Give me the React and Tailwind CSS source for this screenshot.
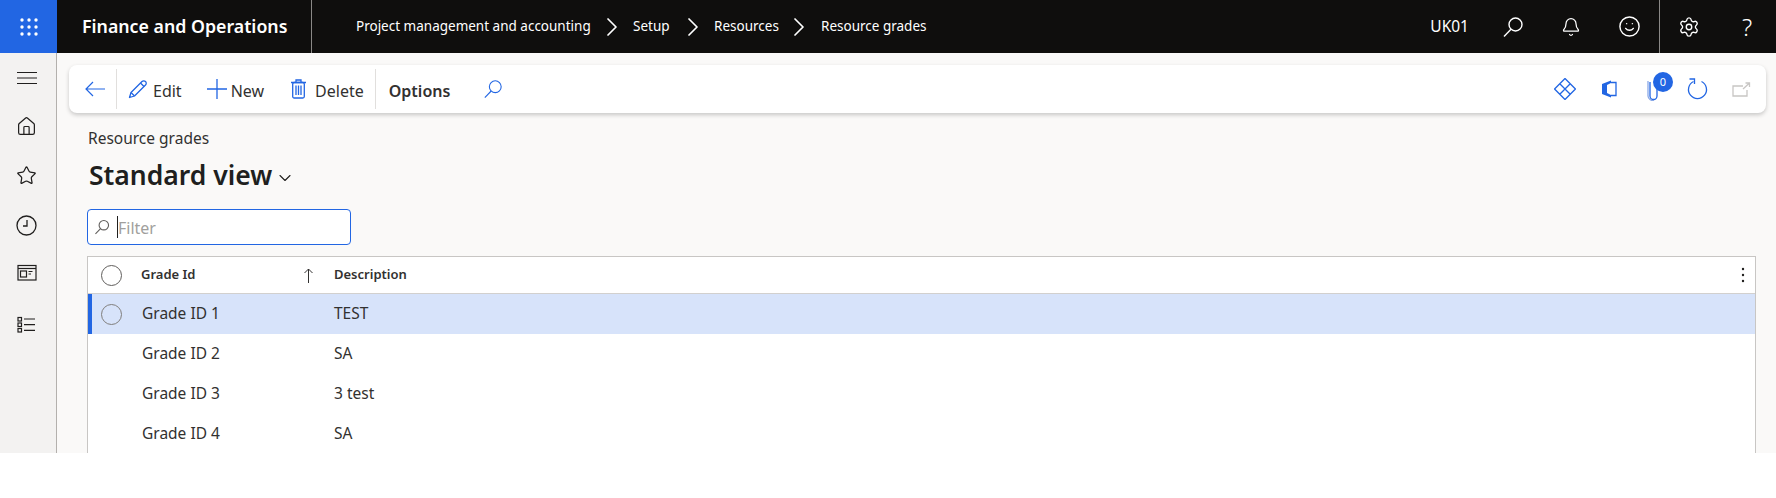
import React from "react";
import { Home, Star, Bell, Settings, Smile, ChevronDown, ChevronRight } from "lucide-react";

const font = { fontFamily: '"Noto Sans", "Open Sans", sans-serif' };

function Waffle() {
  return (
    <svg width="20" height="20" viewBox="0 0 20 20" fill="#fff">
      {[3, 10, 17].map((y) =>
        [3, 10, 17].map((x) => <circle key={`${x}-${y}`} cx={x} cy={y} r="1.7" />)
      )}
    </svg>
  );
}

// Magnifier with the lens up and to the right, like the Fluent one
function SearchIcon({ size = 22, color = "#fff", weight = 1.4 }) {
  return (
    <svg width={size} height={size} viewBox="0 0 22 22" fill="none" stroke={color} strokeWidth={weight}>
      <circle cx="13.5" cy="8.5" r="6.5" />
      <path d="M9 13.2 2 20.5" />
    </svg>
  );
}

function WorkspaceIcon() {
  return (
    <svg width="20" height="18" viewBox="0 0 20 18" fill="none" stroke="#201f1e" strokeWidth="1.2">
      <rect x="1" y="1.500" width="18" height="14.500" />
      <path d="M1 4.500h18" />
      <rect x="3.500" y="7" width="6" height="6" />
      <path d="M11.500 7.500h4M11.500 10h2.500" />
    </svg>
  );
}

function ListIcon() {
  return (
    <svg width="20" height="18" viewBox="0 0 20 18" fill="none" stroke="#201f1e" strokeWidth="1.2">
      <rect x="1" y="1.500" width="3.500" height="3.500" />
      <rect x="1" y="7" width="3.500" height="3.500" />
      <rect x="1" y="12.500" width="3.500" height="3.500" />
      <path d="M7 3h11M7 8.700h11M7 14.300h11" />
    </svg>
  );
}

function BackIcon() {
  return (
    <svg width="20" height="16" viewBox="0 0 20 16" fill="none" stroke="#2266e3" strokeWidth="1.200">
      <path d="M20 8H1M8 1 1 8l7 7" />
    </svg>
  );
}

function PencilIcon() {
  return (
    <svg width="20" height="20" viewBox="0 0 20 20" fill="none" stroke="#2266e3" strokeWidth="1.300" strokeLinejoin="round">
      <path d="M14 2.500a2.400 2.400 0 0 1 3.500 3.500L6.500 17 1.500 18.500 3 13.500z" />
      <path d="M12.500 4 16 7.500M3 13.500 6.500 17" />
    </svg>
  );
}

function PlusIcon() {
  return (
    <svg width="20" height="20" viewBox="0 0 20 20" stroke="#2266e3" strokeWidth="1.300">
      <path d="M10 0v20M0 10h20" />
    </svg>
  );
}

function TrashIcon() {
  return (
    <svg width="15" height="20" viewBox="0 0 15 20" fill="none" stroke="#2266e3" strokeWidth="1.300">
      <path d="M0 3.500h15M5 3.500V1h5v2.500" />
      <rect x="1.700" y="3.500" width="11.600" height="15.500" rx="1.500" />
      <path d="M5 6.500v9.500M7.500 6.500v9.500M10 6.500v9.500" />
    </svg>
  );
}

function DiamondIcon() {
  return (
    <svg width="22" height="22" viewBox="0 0 20 20" fill="none" stroke="#2266e3" strokeWidth="1.200" strokeLinejoin="round">
      <path d="M10 .5 19.500 10 10 19.500.5 10zM5.250 5.250l9.500 9.500M14.750 5.250l-9.500 9.500" />
    </svg>
  );
}

function OfficeIcon() {
  return (
    <svg width="15" height="18" viewBox="0 0 15 18">
      <path d="M0 4 9 .5v2.500L5 5v8l4 2v2.500L0 14z" fill="#2266e3" />
      <path d="M9 2.500h5v13H9" fill="none" stroke="#2266e3" strokeWidth="1.300" />
    </svg>
  );
}

function ClipIcon() {
  return (
    <svg width="12" height="24" viewBox="0 0 12 24" fill="none" stroke="#2266e3" strokeWidth="1.300">
      <path d="M3 5v14a3.500 3.500 0 0 0 7 0V4" />
      <path d="M1 4v15a5 5 0 0 0 6 4.500" stroke="#8aa9e8" />
    </svg>
  );
}

function RefreshIcon() {
  return (
    <svg width="21" height="22" viewBox="0 0 21 22" fill="none" stroke="#2266e3" strokeWidth="1.300">
      <path d="M6.500 3.500a9 9 0 1 0 8 0" />
      <path d="M2.500 1h5v5" />
    </svg>
  );
}

function OpenIcon() {
  return (
    <svg width="19" height="15" viewBox="0 0 19 15" fill="none" stroke="#c8c6c4" strokeWidth="1.300">
      <path d="M11 4H1v10h14V8" />
      <path d="M11 7 17.500 1M13.500 1h4v4" />
    </svg>
  );
}

function SortArrow() {
  return (
    <svg width="9" height="15" viewBox="0 0 9 15" fill="none" stroke="#323130" strokeWidth="1">
      <path d="M4.500 15V1M.5 5l4-4 4 4" />
    </svg>
  );
}

function Circle({ className }) {
  return <span className={`block w-[21px] h-[21px] rounded-full border ${className}`} />;
}

const crumbs = ["Setup", "Resources", "Resource grades"];
const rows = [
  { id: "Grade ID 1", desc: "TEST", selected: true },
  { id: "Grade ID 2", desc: "SA" },
  { id: "Grade ID 3", desc: "3 test" },
  { id: "Grade ID 4", desc: "SA" },
];

function TopBar() {
  return (
    <header className="flex h-[53px] shrink-0 items-center bg-[#0f0e0d] text-white">
      <div className="flex h-full w-[57px] items-center justify-center bg-[#2266e3]">
        <Waffle />
      </div>
      <div className="flex h-full w-[255px] items-center border-r border-[#8a8886] pl-[25px] text-[17.750px] font-semibold">
        Finance and Operations
      </div>
      <nav className="flex items-center pl-[44px] text-[13.500px]">
        <span className="w-[240px]">Project management and accounting</span>
        <ChevronRight size={32} strokeWidth={1.300} />
        <span className="ml-[5px] w-[48px]">{crumbs[0]}</span>
        <ChevronRight size={32} strokeWidth={1.300} className="-ml-[4px]" />
        <span className="ml-[5px] w-[72px]">{crumbs[1]}</span>
        <ChevronRight size={32} strokeWidth={1.300} className="-ml-[3px]" />
        <span className="ml-[6px]">{crumbs[2]}</span>
      </nav>
      <div className="ml-auto flex h-full items-center">
        <span className="mr-[15px] text-[15.500px]">UK01</span>
        <span className="flex w-[58px] justify-center"><SearchIcon /></span>
        <span className="flex w-[58px] justify-center"><Bell size={20} strokeWidth={1.500} /></span>
        <span className="flex w-[59px] justify-center"><Smile size={23} strokeWidth={1.500} /></span>
        <span className="flex h-full w-[59px] items-center justify-center border-l border-[#8a8886]">
          <Settings size={22} strokeWidth={1.500} />
        </span>
        <span className="flex w-[58px] justify-center text-[24px] font-light">?</span>
      </div>
    </header>
  );
}

function Sidebar() {
  return (
    <aside className="flex w-[57px] shrink-0 flex-col items-center border-r border-[#b3b0ad] bg-[#f3f2f1] pt-[15px] pr-[3px] text-[#201f1e]">
      <div className="flex h-[20px] items-center">
        <svg width="20" height="12" viewBox="0 0 20 12" stroke="#201f1e" strokeWidth="1">
          <path d="M0 .5h20M0 6h20M0 11.500h20" />
        </svg>
      </div>
      <div className="mt-[28px] flex flex-col items-center gap-[28px]">
        <Home size={21} strokeWidth={1.400} />
        <Star size={21} strokeWidth={1.400} />
        <svg className="mt-[1px]" width="21" height="21" viewBox="0 0 21 21" fill="none" stroke="#201f1e" strokeWidth="1.300">
          <circle cx="10.500" cy="10.500" r="9.500" />
          <path d="M11 5v6H7" />
        </svg>
        <WorkspaceIcon />
        <span className="mt-[6px]"><ListIcon /></span>
      </div>
    </aside>
  );
}

function Toolbar() {
  return (
    <div className="ml-[12px] mr-[10px] mt-[12px] flex h-[48px] items-center rounded-lg bg-white pl-[16px] text-[16px] text-[#323130] shadow-[0_2px_4px_rgba(0,0,0,0.2)]">
      <BackIcon />
      <span className="ml-[11px] h-[40px] w-px bg-[#e1dfdd]" />
      <span className="ml-[11px]"><PencilIcon /></span>
      <span className="relative top-[2px] ml-[5px]">Edit</span>
      <span className="ml-[25px]"><PlusIcon /></span>
      <span className="relative top-[2px] ml-[4px]">New</span>
      <span className="ml-[27px]"><TrashIcon /></span>
      <span className="relative top-[2px] ml-[9px]">Delete</span>
      <span className="ml-[11px] h-[40px] w-px bg-[#e1dfdd]" />
      <span className="relative top-[2px] ml-[13px] font-semibold">Options</span>
      <span className="ml-[33px]"><SearchIcon size={20} color="#2266e3" weight={1.200} /></span>
      <div className="ml-auto mr-[3px] flex items-center">
        <span className="flex w-[44px] justify-center"><DiamondIcon /></span>
        <span className="flex w-[44px] justify-center"><OfficeIcon /></span>
        <span className="relative flex w-[44px] justify-center">
          <ClipIcon />
          <span className="absolute -top-[5px] left-[22px] flex h-[20px] w-[20px] items-center justify-center rounded-full bg-[#2266e3] text-[11px] text-white">0</span>
        </span>
        <span className="flex w-[44px] justify-center"><RefreshIcon /></span>
        <span className="flex w-[44px] justify-center"><OpenIcon /></span>
      </div>
    </div>
  );
}

function Grid() {
  return (
    <div className="ml-[30px] mr-[20px] mt-[11px] border border-b-0 border-[#c8c6c4] bg-white text-[#323130]">
      <div className="flex h-[37px] items-center border-b border-[#d2d0ce] text-[13px] font-semibold">
        <span className="flex w-[46px] justify-center"><Circle className="border-[#605e5c]" /></span>
        <span className="ml-[7px] w-[163px]">Grade Id</span>
        <SortArrow />
        <span className="ml-[21px]">Description</span>
        <svg className="ml-auto mr-[10px]" width="4" height="16" viewBox="0 0 4 16" fill="#201f1e">
          <circle cx="2" cy="2" r="1.200" />
          <circle cx="2" cy="8" r="1.200" />
          <circle cx="2" cy="14" r="1.200" />
        </svg>
      </div>
      {rows.map((row) => (
        <div key={row.id} className={`flex h-[40px] items-center text-[15.500px] ${row.selected ? "bg-[#d7e3fa]" : ""}`}>
          <span className={`h-full w-[4px] ${row.selected ? "bg-[#2266e3]" : ""}`} />
          <span className="flex w-[38px] justify-center">
            {row.selected && <Circle className="border-[#807e7c]" />}
          </span>
          <span className="ml-[12px] w-[192px]">{row.id}</span>
          <span>{row.desc}</span>
        </div>
      ))}
    </div>
  );
}

export default function App() {
  return (
    <div className="flex h-[453px] flex-col overflow-hidden bg-white" style={font}>
      <TopBar />
      <div className="flex min-h-0 flex-1">
        <Sidebar />
        <main className="min-w-0 flex-1 overflow-hidden bg-[#faf9f8]">
          <Toolbar />
          <div className="ml-[31px] mt-[15px] text-[15.500px] leading-[20px] text-[#323130]">Resource grades</div>
          <div className="ml-[32px] mt-[8px] flex items-center text-[#201f1e]">
            <span className="text-[26.500px] leading-[38px] font-semibold">Standard view</span>
            <ChevronDown size={20} strokeWidth={1.300} className="ml-[3px] mt-[6px]" />
          </div>
          <div className="ml-[30px] mt-[15px] flex h-[36px] w-[264px] items-center rounded-[4px] border border-[#2266e3] bg-white pl-[6px]">
            <SearchIcon size={16} color="#605e5c" weight={1.500} />
            <span className="ml-[7px] h-[22px] w-px bg-[#201f1e]" />
            <span className="relative top-[1px] text-[16px] text-[#a19f9d]">Filter</span>
          </div>
          <Grid />
        </main>
      </div>
    </div>
  );
}
